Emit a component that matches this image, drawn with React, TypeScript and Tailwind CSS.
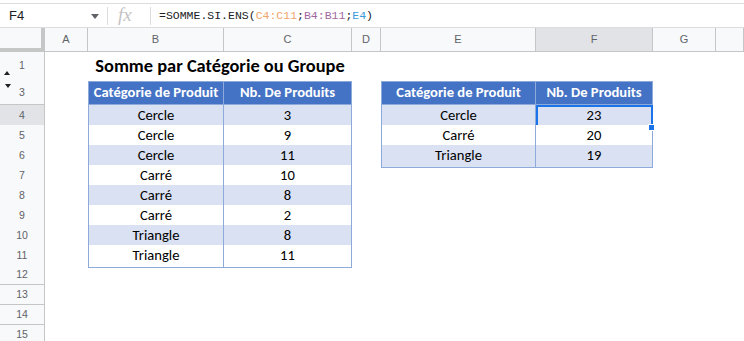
import type { ReactNode } from "react";

const cols = ["A", "B", "C", "D", "E", "F", "G", ""];
const gridCols = "grid grid-cols-[45px_43px_136px_128px_29px_155px_117px_63px_1fr]";

const leftRows = [
  ["Cercle", "3"],
  ["Cercle", "9"],
  ["Cercle", "11"],
  ["Carré", "10"],
  ["Carré", "8"],
  ["Carré", "2"],
  ["Triangle", "8"],
  ["Triangle", "11"],
];

const rightRows = [
  ["Cercle", "23"],
  ["Carré", "20"],
  ["Triangle", "19"],
];

const cellFont = "font-['Carlito','Lato',sans-serif] text-[14.6px] text-black";

function RowHead({ n, active, children }: { n: number; active?: boolean; children?: ReactNode }) {
  return (
    <div
      className={`relative flex items-center justify-center border-r border-b border-[#c4c7c5] font-['Liberation_Sans',Arial,sans-serif] text-[10.5px] text-[#5f6368] ${
        active ? "bg-[#e1e3e6]" : "bg-[#f8f9fa]"
      }`}
    >
      {n}
      {children}
    </div>
  );
}

function Cell({
  children,
  head,
  band,
  first,
  top,
  selected,
}: {
  children?: ReactNode;
  head?: boolean;
  band?: boolean;
  first?: boolean;
  top?: boolean;
  selected?: boolean;
}) {
  const bg = head ? "bg-[#4472c4] font-bold !text-white" : band ? "bg-[#d9e1f2]" : "bg-white";
  return (
    <div
      className={`flex h-full items-center justify-center border-r border-b border-[#8eaadb] ${cellFont} ${bg} ${
        first ? "border-l" : ""
      } ${top ? "border-t" : ""} ${selected ? "outline-2 -outline-offset-2 outline-[#1a73e8]" : ""}`}
    >
      {children}
    </div>
  );
}

export default function App() {
  return (
    <div className="h-[341px] w-[744px] overflow-hidden bg-white">
      {/* formula bar */}
      <div className="mt-[3px] flex h-[25px] items-center border-t border-b border-[#dadce0] font-['Liberation_Sans',Arial,sans-serif]">
        <span className="ml-[9px] w-[78px] text-[13px] text-[#202124]">F4</span>
        <svg width="8" height="5" viewBox="0 0 8 5" className="ml-[4px] mt-[2px]">
          <path d="M0 0h8L4 5z" fill="#5f6368" />
        </svg>
        <div className="ml-[8px] h-[18px] w-px bg-[#dadce0]" />
        <span className="ml-[10px] w-[32px] font-['Liberation_Serif',serif] text-[19px] italic text-[#c4c4c4]">fx</span>
        <div className="h-[18px] w-px bg-[#dadce0]" />
        <span className="ml-[8px] font-['Liberation_Mono',monospace] text-[11.5px] text-[#202124]">
          =SOMME.SI.ENS(<span className="text-[#f1a46a]">C4:C11</span>;
          <span className="text-[#a1689f]">B4:B11</span>;<span className="text-[#3c9ad6]">E4</span>)
        </span>
      </div>

      {/* column headers */}
      <div className={`${gridCols} h-[24px]`}>
        <div className="border-r-4 border-b-4 border-[#c4c7c5] bg-[#f8f9fa]" />
        {cols.map((c, i) => (
          <div
            key={i}
            className={`flex items-center justify-center border-r border-b border-[#c4c7c5] font-['Liberation_Sans',Arial,sans-serif] text-[11px] text-[#5f6368] ${
              c === "F" ? "bg-[#e1e3e6]" : "bg-[#f8f9fa]"
            }`}
          >
            {c}
          </div>
        ))}
      </div>

      {/* row 1 */}
      <div className={`${gridCols} h-[29px]`}>
        <RowHead n={1}>
          <svg width="6" height="4" viewBox="0 0 6 4" className="absolute bottom-[6px] left-[4px]">
            <path d="M0 4h6L3 0z" fill="#202124" />
          </svg>
        </RowHead>
        <div />
        <div className="col-span-2 flex items-end justify-center pb-[2px] font-['Carlito','Lato',sans-serif] text-[18.4px] font-bold text-black">
          Somme par Catégorie ou Groupe
        </div>
        <div className="col-span-5" />
      </div>

      {/* row 3 header */}
      <div className={`${gridCols} h-[24px]`}>
        <RowHead n={3}>
          <svg width="6" height="4" viewBox="0 0 6 4" className="absolute top-[3px] left-[5px]">
            <path d="M0 0h6L3 4z" fill="#202124" />
          </svg>
        </RowHead>
        <div />
        <Cell head first top>Catégorie de Produit</Cell>
        <Cell head top>Nb. De Produits</Cell>
        <div />
        <Cell head first top>Catégorie de Produit</Cell>
        <Cell head top>Nb. De Produits</Cell>
        <div className="col-span-2" />
      </div>

      {Array.from({ length: 12 }, (_, i) => {
        const n = i + 4;
        const l = leftRows[i];
        const r = rightRows[i];
        const band = i % 2 === 0;
        return (
          <div key={n} className={`${gridCols} h-[20px]`}>
            <RowHead n={n} active={n === 4} />
            <div />
            {l ? (
              <>
                <Cell band={band} first>{l[0]}</Cell>
                <Cell band={band}>{l[1]}</Cell>
              </>
            ) : (
              <div className="col-span-2" />
            )}
            <div />
            {r ? (
              <>
                <Cell band={band} first>{r[0]}</Cell>
                <div className="relative">
                  <Cell band={band} selected={n === 4}>{r[1]}</Cell>
                  {n === 4 && (
                    <div className="absolute -right-[2px] -bottom-[3px] z-10 h-[7px] w-[7px] border border-white bg-[#1a73e8]" />
                  )}
                </div>
              </>
            ) : (
              <div className="col-span-2" />
            )}
            <div className="col-span-2" />
          </div>
        );
      })}
    </div>
  );
}
